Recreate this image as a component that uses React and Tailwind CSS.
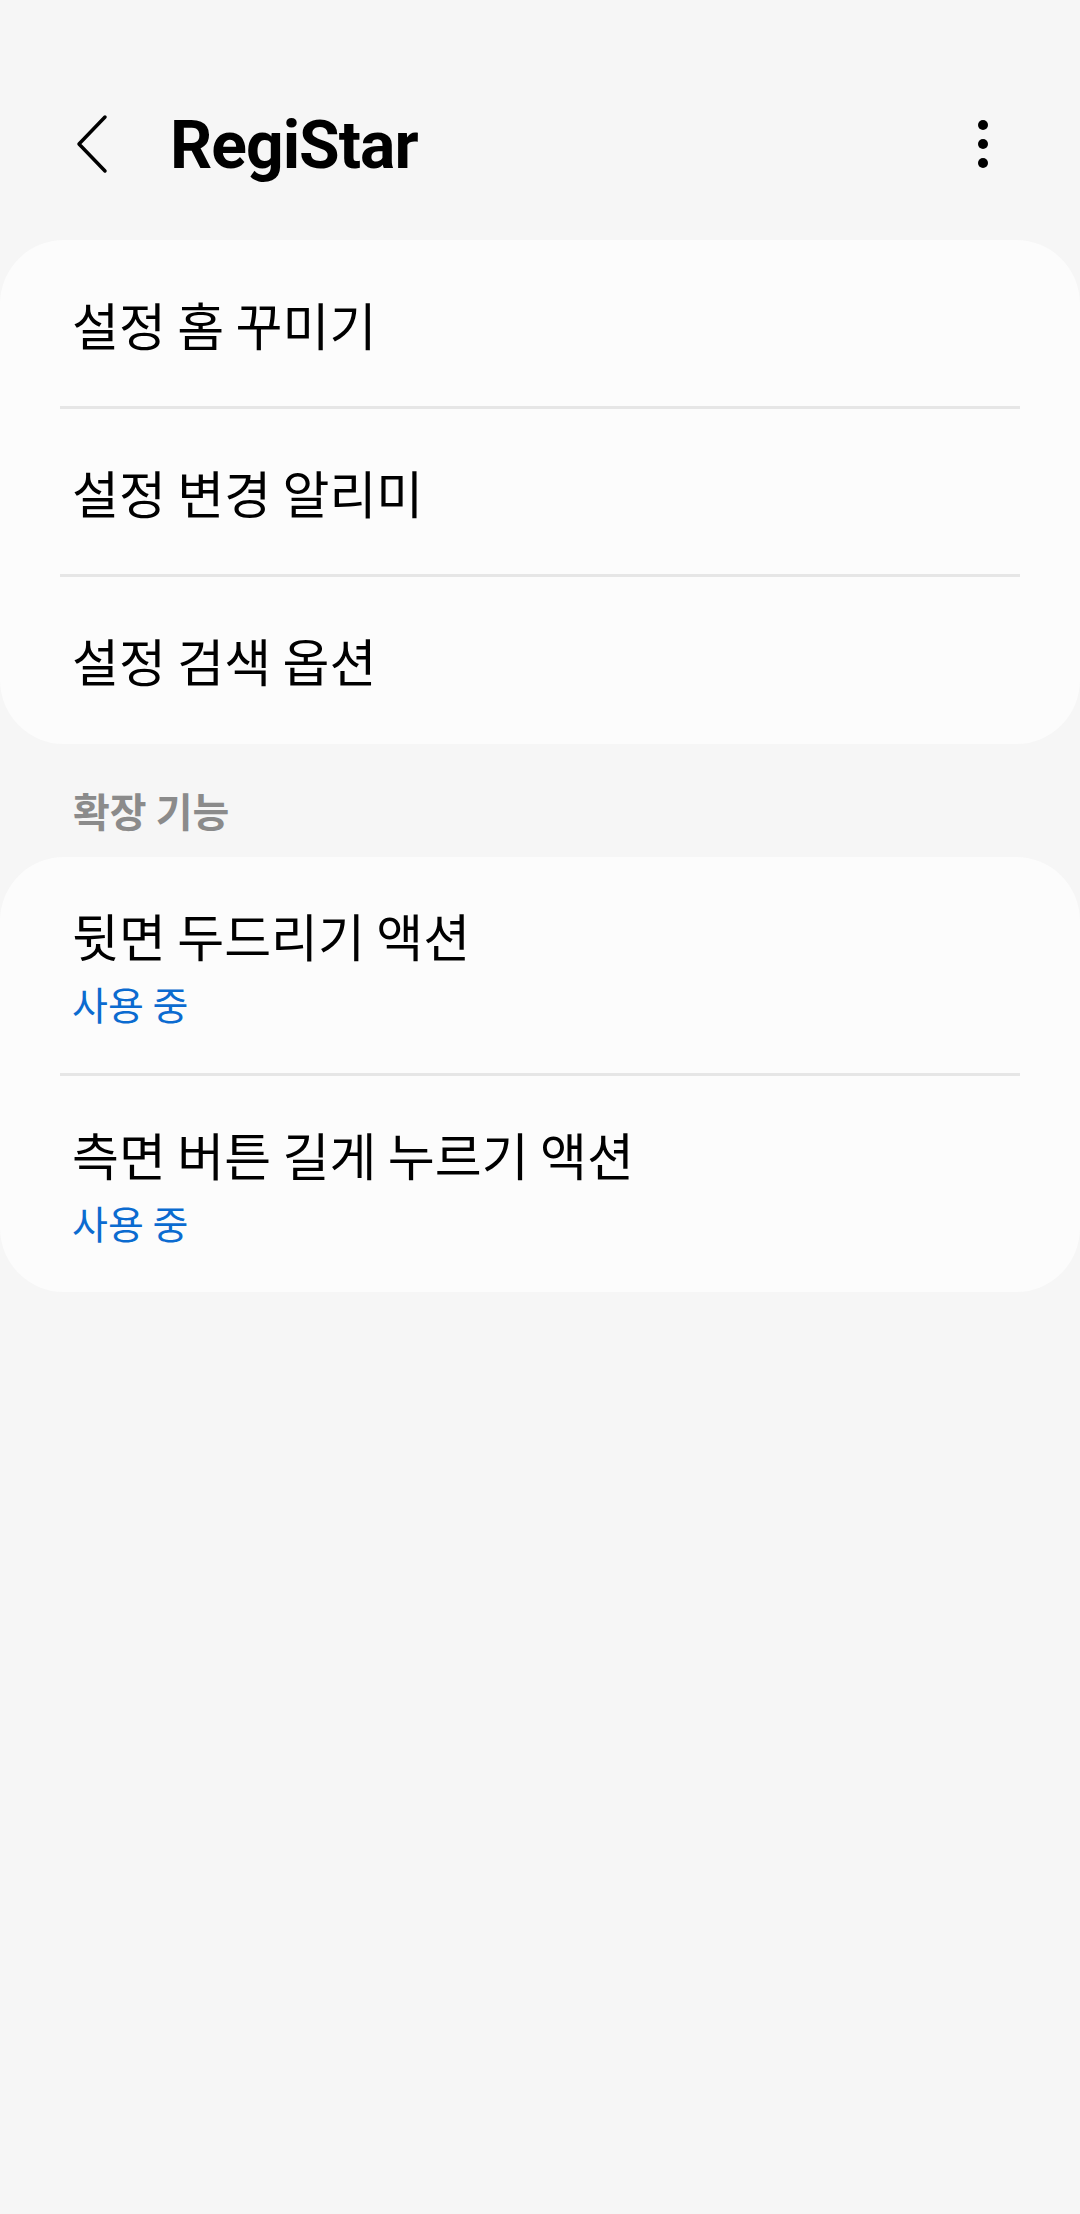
const font = { fontFamily: '"Noto Sans CJK KR", "Noto Sans", sans-serif' };

function Row({ title, border }) {
  return (
    <div className="relative flex h-[168px] items-center pl-[72px]">
      <span className="text-[51px] leading-[60px] text-black">{title}</span>
      {border && <div className="absolute -bottom-[1px] left-[60px] right-[60px] h-[3px] bg-[#e6e6e6]" />}
    </div>
  );
}

function StatusRow({ title, status }) {
  return (
    <div className="flex flex-col pl-[72px] pt-[48px] pb-[46px]">
      <span className="text-[51px] leading-[60px] text-black">{title}</span>
      <span className="mt-[14px] text-[39px] leading-[48px] text-[#0b6bd0]">{status}</span>
    </div>
  );
}

export default function App() {
  return (
    <div className="min-h-[2214px] w-[1080px] bg-[#f6f6f6] pt-[104px]" style={font}>
      {/* header */}
      <div className="flex h-[80px] items-center pl-[76px] pr-[91px] mb-[56px]">
        <svg width="34" height="60" viewBox="0 0 34 60" fill="none">
          <path d="M29 3 L3 30 L29 57" stroke="#000" strokeWidth="3.5" strokeLinecap="round" strokeLinejoin="round" />
        </svg>
        <span
          className="ml-[60px] pt-[4px] text-[66px] font-bold leading-[80px] tracking-[-1px] text-black"
          style={{ fontFamily: 'Roboto, "Noto Sans", sans-serif' }}
        >
          RegiStar
        </span>
        <svg className="ml-auto" width="12" height="52" viewBox="0 0 12 52">
          <circle cx="6" cy="7" r="5" fill="#000" />
          <circle cx="6" cy="26" r="5" fill="#000" />
          <circle cx="6" cy="45" r="5" fill="#000" />
        </svg>
      </div>

      {/* main card */}
      <div className="rounded-[64px] bg-[#fcfcfc]">
        <Row title="설정 홈 꾸미기" border />
        <Row title="설정 변경 알리미" border />
        <Row title="설정 검색 옵션" />
      </div>

      {/* section label */}
      <div className="flex h-[113px] items-center pl-[73px] pt-[18px]">
        <span className="text-[40px] font-bold leading-[48px] text-[#8b8b8b]">확장 기능</span>
      </div>

      {/* extension card */}
      <div className="rounded-[64px] bg-[#fcfcfc]">
        <StatusRow title="뒷면 두드리기 액션" status="사용 중" />
        <div className="mx-[60px] h-[3px] bg-[#e6e6e6]" />
        <StatusRow title="측면 버튼 길게 누르기 액션" status="사용 중" />
      </div>
    </div>
  );
}
